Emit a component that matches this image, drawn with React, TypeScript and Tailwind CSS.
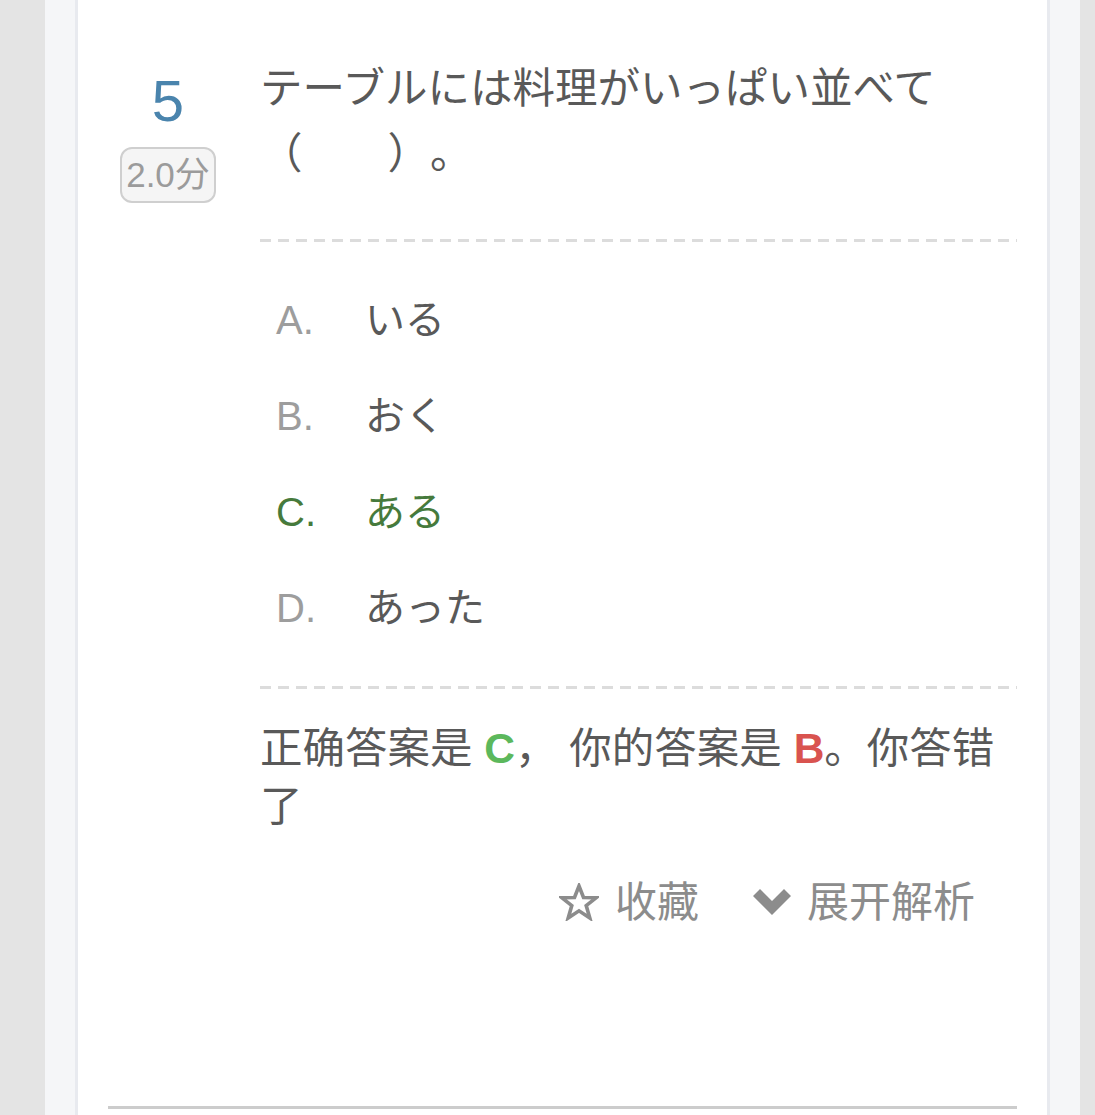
import type { ReactNode } from 'react';

type Option = {
  key: string;
  text: string;
  correct?: boolean;
};

const options: Option[] = [
  { key: 'A', text: 'いる' },
  { key: 'B', text: 'おく' },
  { key: 'C', text: 'ある', correct: true },
  { key: 'D', text: 'あった' },
];

function DashedLine() {
  return (
    <div className="h-[3px] w-full bg-[linear-gradient(to_right,#dcdcdc_0_11px,transparent_11px_18px)] bg-[length:18px_3px]" />
  );
}

function StarIcon() {
  return (
    <svg width="40" height="38" viewBox="0 0 40 38" className="shrink-0">
      <polygon
        points="20,3 24.5,14.5 37,14.8 27.2,22.6 30.8,35 20,27.8 9.2,35 12.8,22.6 3,14.8 15.5,14.5"
        fill="none"
        stroke="#8c8c8c"
        strokeWidth="3.6"
        strokeLinejoin="miter"
      />
    </svg>
  );
}

function ChevronIcon() {
  return (
    <svg width="38" height="26" viewBox="0 0 38 26" className="shrink-0">
      <path d="M0 7 L7 0 L19 12 L31 0 L38 7 L19 26 Z" fill="#8c8c8c" />
    </svg>
  );
}

function ActionButton({ icon, label }: { icon: ReactNode; label: string }) {
  return (
    <div className="flex items-center gap-[16px]">
      {icon}
      <span>{label}</span>
    </div>
  );
}

export default function App() {
  return (
    <div className="flex h-[1115px] w-full overflow-hidden bg-[#e4e4e4] pl-[45px] pr-[15px] font-['Liberation_Sans','Noto_Sans_CJK_SC',sans-serif] [text-spacing-trim:space-all]">
      <div className="flex-1 bg-[#f5f6f8] px-[30px]">
        <div className="flex h-full flex-col border-x-[3px] border-[#e8eaef] bg-white px-[30px]">
          <div className="flex gap-[32px]">
            {/* номер вопроса + баллы */}
            <div className="flex w-[120px] shrink-0 flex-col items-center pt-[72px]">
              <div className="text-[58px] leading-[58px] text-[#4a84ad]">5</div>
              <div className="mt-[17px] flex h-[56px] items-center rounded-[12px] border-2 border-[#cfcfcf] bg-[#f5f5f5] px-[4px] text-[35px] text-[#9b9b9b]">
                2.0分
              </div>
            </div>

            <div className="min-w-0 flex-1 pt-[56px]">
              <div className="font-['Liberation_Sans','Noto_Sans_CJK_JP',sans-serif] text-[42.5px] leading-[65px] text-[#595959]">
                テーブルには料理がいっぱい並べて
                <span className="inline-block whitespace-pre">{'（　　）。'}</span>
              </div>

              <div className="mt-[53px]">
                <DashedLine />
              </div>

              <div className="py-[30px] font-['Liberation_Sans','Noto_Sans_CJK_JP',sans-serif]">
                {options.map((o) => (
                  <div
                    key={o.key}
                    className={`flex h-[96px] items-center pl-[16px] text-[40px] ${
                      o.correct ? 'text-[#467a3c]' : 'text-[#595959]'
                    }`}
                  >
                    <span className={`w-[89px] ${o.correct ? '' : 'text-[#9d9d9d]'}`}>
                      {o.key}.
                    </span>
                    <span>{o.text}</span>
                  </div>
                ))}
              </div>

              <DashedLine />

              <div className="mt-[31px] text-[42.5px] leading-[58px] text-[#595959]">
                正确答案是 <b className="text-[#5cb85c]">C</b>， 你的答案是{' '}
                <b className="text-[#d9534f]">B</b>。你答错了
              </div>

              <div className="mt-[37px] flex h-[58px] items-center justify-end gap-[54px] pr-[42px] text-[42px] text-[#8c8c8c]">
                <ActionButton icon={<StarIcon />} label="收藏" />
                <ActionButton icon={<ChevronIcon />} label="展开解析" />
              </div>
            </div>
          </div>

          <div className="mt-auto mb-[6px] h-[3px] w-full bg-[#cccccc]" />
        </div>
      </div>
    </div>
  );
}
